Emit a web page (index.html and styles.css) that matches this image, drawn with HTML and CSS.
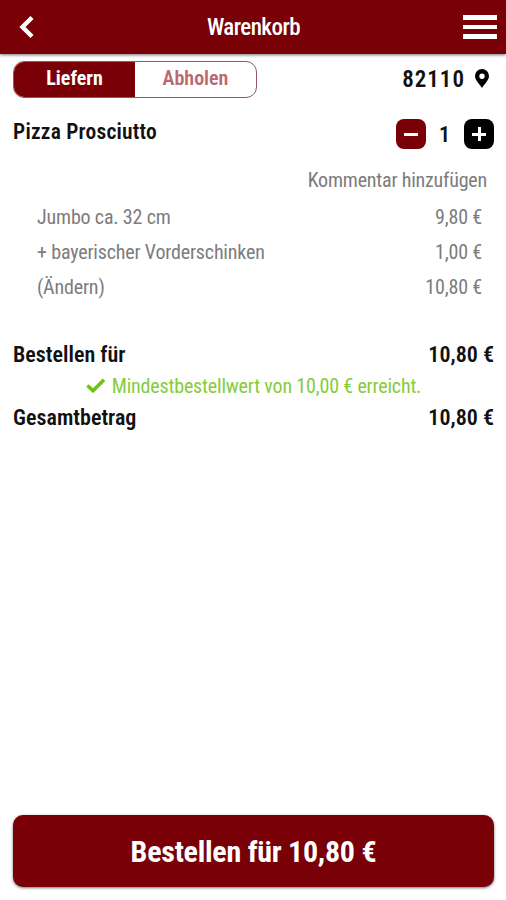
FILE: index.html
```
<!DOCTYPE html>
<html lang="de">
<head>
<meta charset="utf-8">
<title>Warenkorb</title>
<link rel="stylesheet" href="styles.css">
</head>
<body>
<header class="topbar">
  <svg class="back" viewBox="0 0 16 24"><path d="M13 2.500 3.500 12l9.500 9.500" fill="none" stroke="#fff" stroke-width="4.400"/></svg>
  <h1 class="title">Warenkorb</h1>
  <div class="menu"><i></i><i></i><i></i></div>
</header>
<main class="cart">
  <div class="delivery">
    <div class="toggle"><span class="option active">Liefern</span><span class="option">Abholen</span></div>
    <div class="location"><span class="zip">82110</span>
      <svg class="pin" viewBox="0 0 14 19"><path fill="#000" fill-rule="evenodd" d="M7 0a7 7 0 0 0-7 7c0 4 4 7.500 7 12 3-4.500 7-8 7-12a7 7 0 0 0-7-7zm0 4.500a2.700 2.700 0 1 1 0 5.400 2.700 2.700 0 0 1 0-5.400z"/></svg>
    </div>
  </div>
  <div class="item">
    <span class="name">Pizza Prosciutto</span>
    <div class="stepper">
      <span class="step minus"></span><span class="count">1</span><span class="step plus"></span>
    </div>
  </div>
  <div class="comment"><span class="note">Kommentar hinzufügen</span></div>
  <div class="details">
    <div class="line"><span>Jumbo ca. 32 cm</span><span>9,80 €</span></div>
    <div class="line"><span>+ bayerischer Vorderschinken</span><span>1,00 €</span></div>
    <div class="line"><span>(Ändern)</span><span>10,80 €</span></div>
  </div>
  <div class="sum"><span>Bestellen für</span><span>10,80 €</span></div>
  <div class="minimum">
    <svg class="check" viewBox="0 0 20 15"><path d="M1.500 7.500 7 12.700 18 1.800" fill="none" stroke="#6cc40a" stroke-width="3.600"/></svg>
    <span>Mindestbestellwert von 10,00 € erreicht.</span>
  </div>
  <div class="sum"><span>Gesamtbetrag</span><span>10,80 €</span></div>
</main>
<footer class="checkout"><button class="order"><span>Bestellen für 10,80 €</span></button></footer>
</body>
</html>
```
FILE: styles.css
```
* { box-sizing: border-box; }
body {
  margin: 0;
  height: 900px;
  display: flex;
  flex-direction: column;
  background: #fff;
  color: #111;
  font-family: "Roboto Condensed", Roboto, sans-serif;
  font-stretch: 75%;
  font-size: 20px;
  white-space: nowrap;
  overflow: hidden;
}
.topbar {
  flex: none;
  height: 54px;
  padding: 0 9px 0 20px;
  display: grid;
  grid-template-columns: 34px 1fr 34px;
  align-items: center;
  background: #780006;
  box-shadow: 0 1px 3px rgba(0, 0, 0, .55);
}
.back { width: 16px; height: 24px; margin-left: -1px; }
.title { margin: 0 0 0 -10px; text-align: center; color: #fff; font-size: 23px; font-weight: 500; letter-spacing: -.55px; }
.menu { display: grid; gap: 5px; }
.menu i { height: 4.500px; background: #fff; }
.cart { flex: 1; padding: 6px 12px 0 13px; }
.delivery { height: 38px; display: flex; justify-content: space-between; align-items: center; }
.toggle {
  width: 244px;
  height: 37px;
  display: grid;
  grid-template-columns: 121px 1fr;
  border: 1px solid #985860;
  border-radius: 11px;
  overflow: hidden;
}
.option { display: flex; align-items: center; justify-content: center; padding-bottom: 2px; color: #ba6971; font-weight: 600; }
.active { background: #780006; color: #fff; font-weight: 700; }
.location { display: flex; align-items: center; gap: 10px; padding-right: 5px; }
.zip { font-size: 23px; font-weight: 600; letter-spacing: 1px; }
.pin { width: 14px; height: 19px; margin-top: -2px; }
.item { height: 72px; display: flex; justify-content: space-between; align-items: center; }
.name { font-size: 21.500px; font-weight: 600; letter-spacing: .22px; margin-top: -6px; }
.stepper { display: flex; align-items: center; gap: 14px; }
.count { margin-left: -1px; font-size: 22px; font-weight: 600; }
.step {
  width: 30px;
  height: 30px;
  border-radius: 8px;
  background: linear-gradient(#fff, #fff) center / 14px 3px no-repeat #780006;
}
.plus { background: linear-gradient(#fff, #fff) center / 14px 3px no-repeat, linear-gradient(#fff, #fff) center / 3px 14px no-repeat #000; }
.comment { height: 20px; display: flex; justify-content: flex-end; align-items: center; padding-right: 7px; color: #7c7c7c; letter-spacing: -.2px; }
.details { padding: 9px 12px 0 24px; color: #7c7c7c; letter-spacing: -.17px; }
.line { height: 35.300px; display: flex; justify-content: space-between; align-items: center; }
.details + .sum { margin-top: 33.500px; }
.sum { height: 32px; display: flex; justify-content: space-between; align-items: center; font-size: 22px; font-weight: 600; letter-spacing: .02px; }
.minimum { height: 31px; display: flex; justify-content: center; align-items: center; gap: 6px; color: #84cc3a; letter-spacing: -.18px; }
.check { width: 20px; height: 15px; }
.checkout { flex: none; padding: 0 12px 13px 13px; }
.order {
  display: block;
  width: 100%;
  height: 72px;
  border: 0;
  border-radius: 10px;
  background: #780006;
  box-shadow: 0 1px 3px rgba(0, 0, 0, .55);
  color: #fff;
  font: inherit;
  font-size: 30px;
  font-weight: 700;
  letter-spacing: -.25px;
}
```
